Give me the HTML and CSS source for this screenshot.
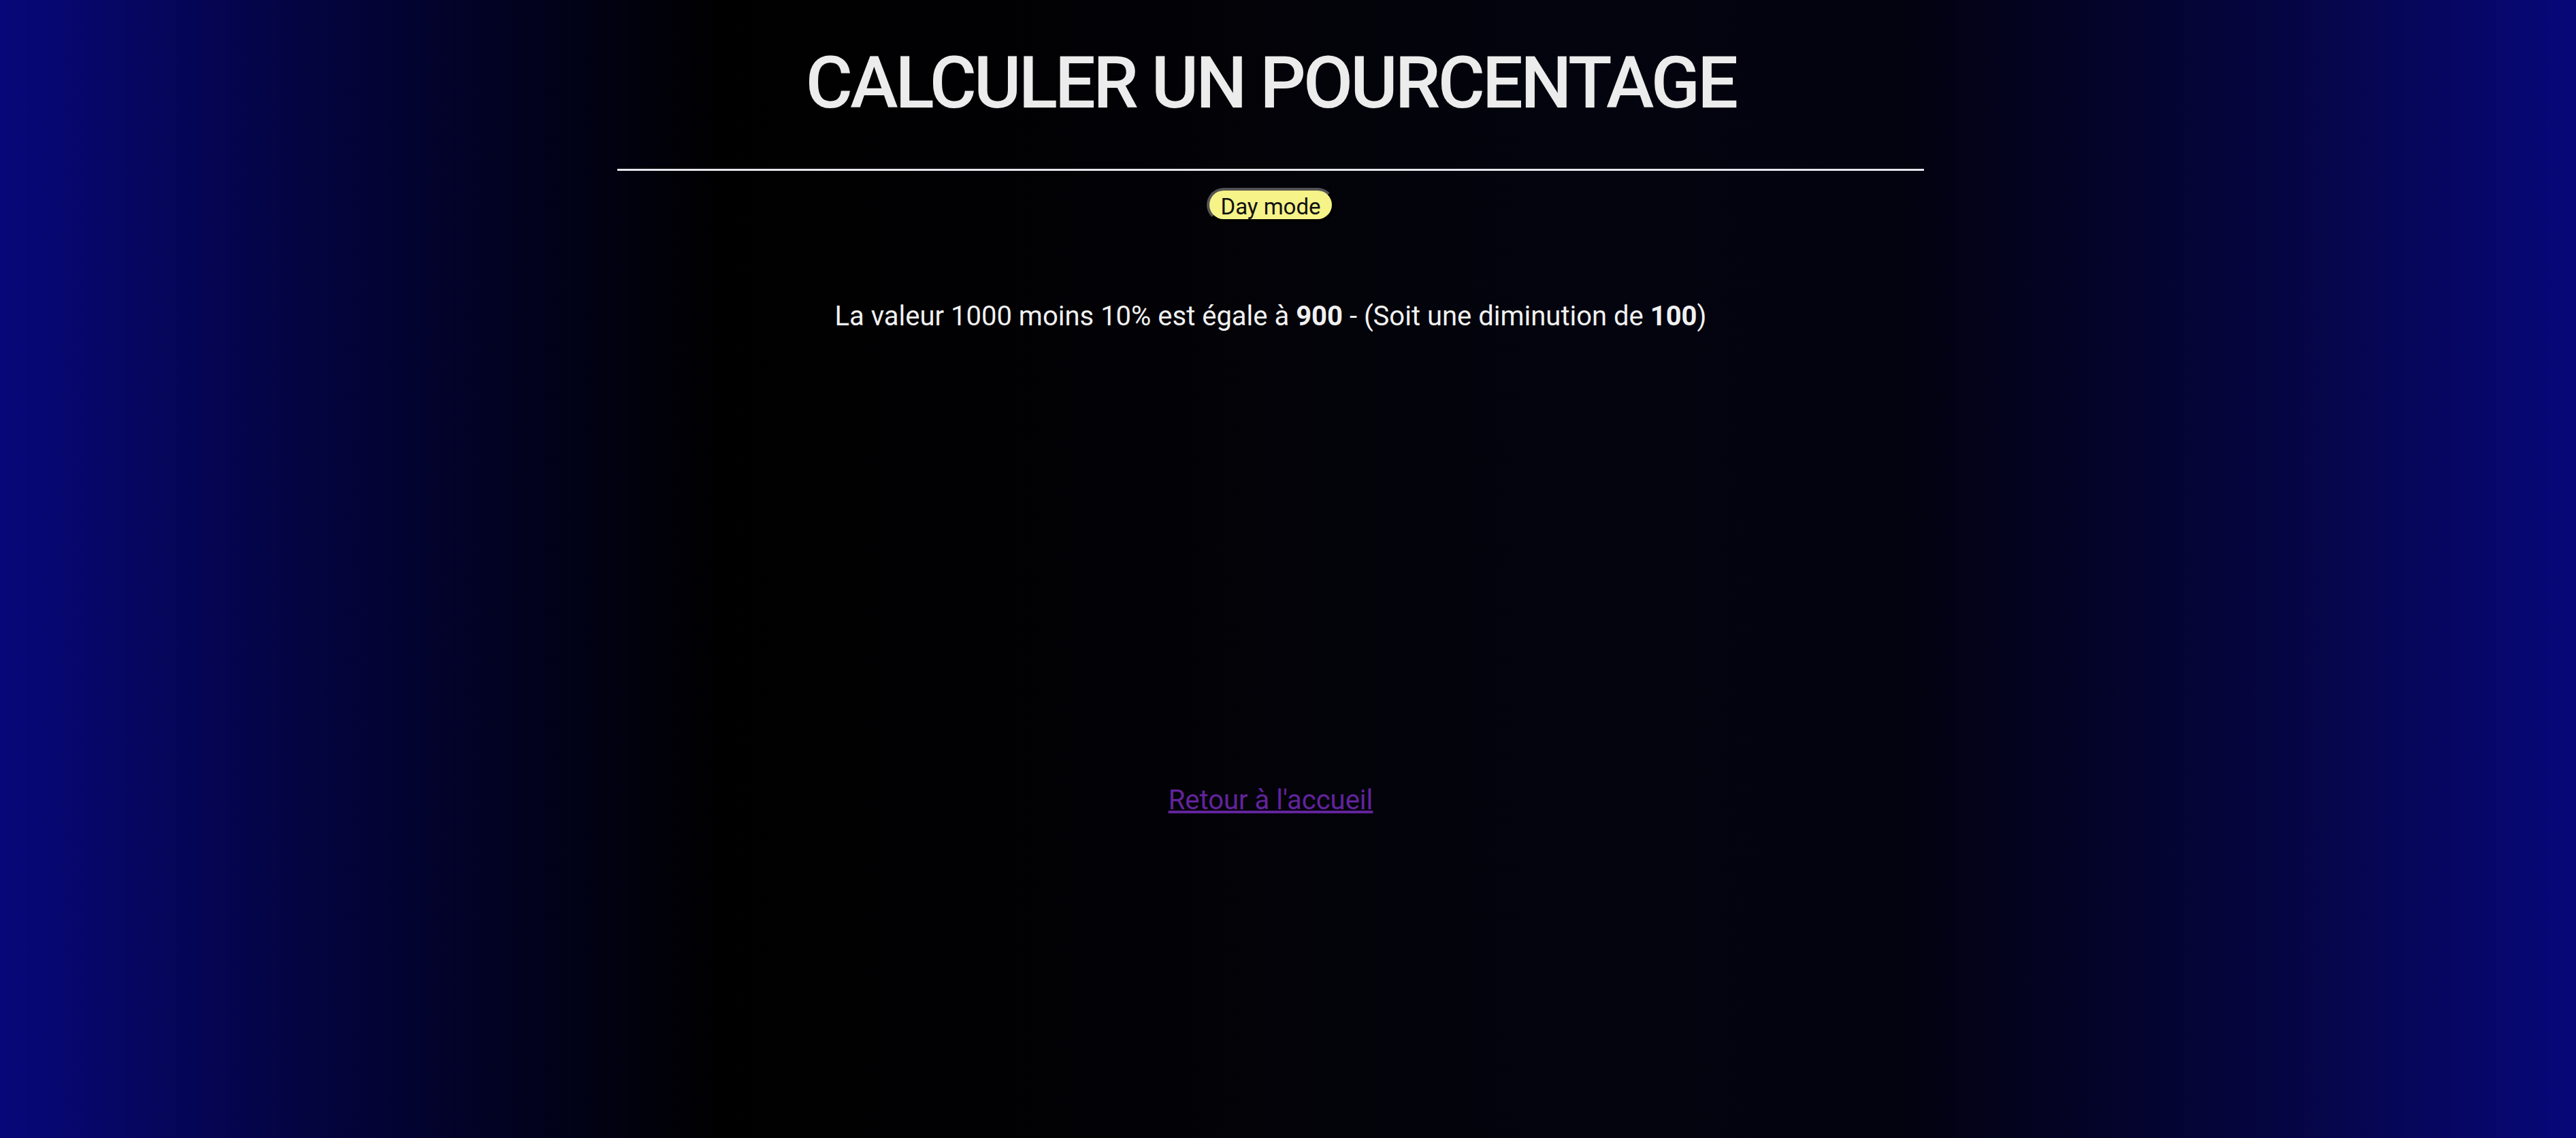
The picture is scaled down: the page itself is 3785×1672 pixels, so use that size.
FILE: index.html
```html
<!DOCTYPE html>
<html lang="fr">
<head>
<meta charset="utf-8">
<title>Calculer un pourcentage</title>
<link rel="stylesheet" href="styles.css">
</head>
<body>
<div class="page">
  <main class="container">
    <h1 class="title">CALCULER UN POURCENTAGE</h1>
    <hr class="rule">
    <div class="toggle-row"><button class="mode-btn" type="button">Day mode</button></div>
    <p class="result">La valeur 1000 moins 10% est égale à <strong>900</strong> - (Soit une diminution de <strong>100</strong>)</p>
    <div class="back-row"><a class="back-link" href="#">Retour à l'accueil</a></div>
  </main>
</div>
</body>
</html>
```

FILE: styles.css
```css
html, body {
  margin: 0;
  padding: 0;
}
body {
  min-height: 100vh;
  background: linear-gradient(to right, #07077a 0%, #040440 12%, #000000 28%, #020206 45%, #04040f 62%, #03020f 74%, #050540 88%, #07077a 100%);
  font-family: Roboto, "Liberation Sans", sans-serif;
  color: #eeeeee;
}
.page {
  padding-right: 51px;
}
.container {
  width: 1920px;
  margin: 0 auto;
  text-align: center;
}
.title {
  margin: 59px 0 0 0;
  font-size: 106px;
  line-height: 127px;
  font-weight: 500;
  letter-spacing: -3.8px;
  color: #ececec;
}
.rule {
  margin: 62px 0 0 0;
  border: 0;
  height: 3px;
  background: #e6e6ec;
}
.toggle-row {
  margin-top: 25px;
}
.mode-btn {
  font-family: Roboto, "Liberation Sans", sans-serif;
  font-size: 33px;
  line-height: 40px;
  padding: 4px 16px 0 16px;
  background: #f6f388;
  color: #111111;
  border: 4px outset #000000;
  border-radius: 26px;
  height: 50px;
  box-sizing: border-box;
  vertical-align: top;
}
.result {
  margin: 115px 0 0 0;
  font-size: 40px;
  line-height: 48px;
  color: #f0f0f0;
}
.result strong {
  font-weight: 700;
}
.back-row {
  margin-top: 663px;
  font-size: 40px;
  line-height: 48px;
}
.back-link {
  color: #62239c;
  text-decoration: underline;
}
```
